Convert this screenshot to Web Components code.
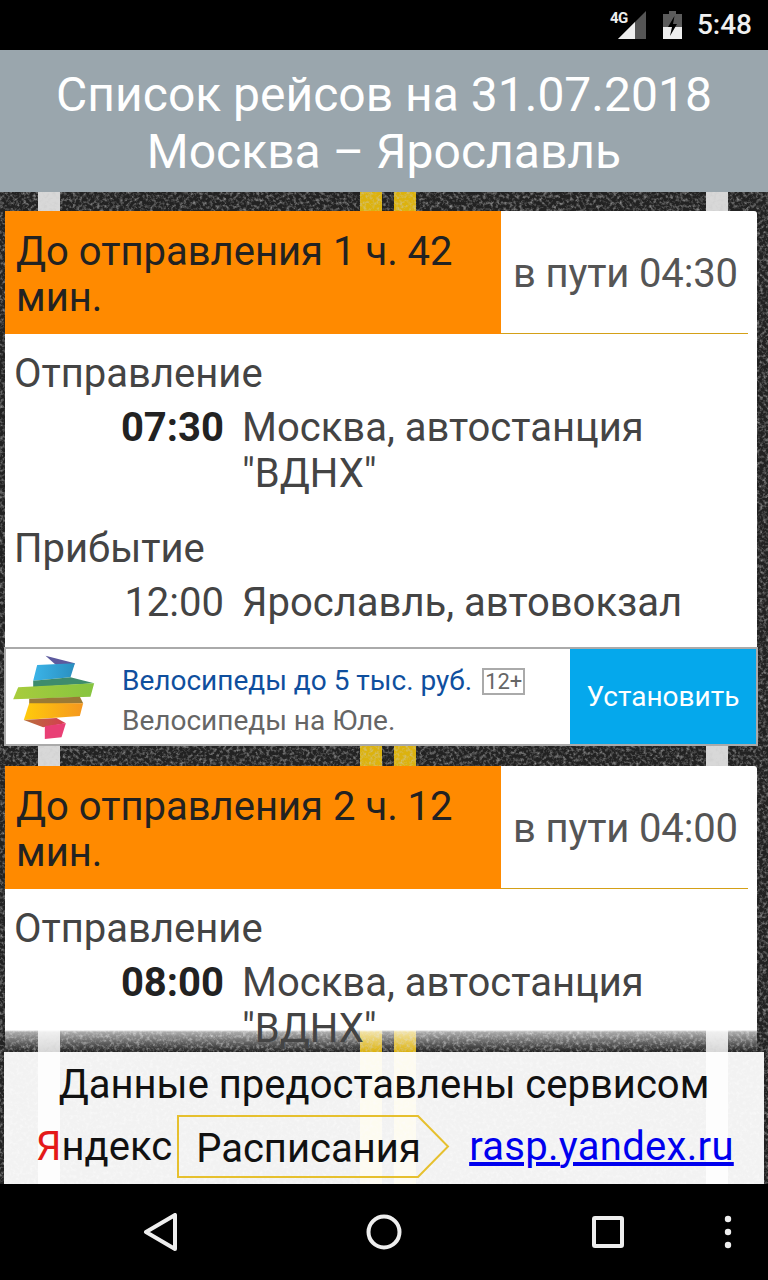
<!DOCTYPE html>
<html lang="ru">
<head>
<meta charset="utf-8">
<title>Список рейсов</title>
<style>
    html, body { margin: 0; padding: 0; background: #000; }
    body { width: 768px; height: 1280px; overflow: hidden; font-family: Roboto, "Liberation Sans", sans-serif; }
    app-shell { width: 768px; height: 1280px; }
</style>
</head>
<body>
<app-shell>
    <status-bar slot="status"></status-bar>
    <title-bar slot="title">
        Список рейсов на 31.07.2018<br>Москва – Ярославль
    </title-bar>
    <trip-card wait="До отправления 1 ч. 42 мин." duration="в пути 04:30"
        dep-time="07:30" dep-place="Москва, автостанция &quot;ВДНХ&quot;"
        arr-time="12:00" arr-place="Ярославль, автовокзал"></trip-card>
    <ad-banner></ad-banner>
    <trip-card class="last" fade wait="До отправления 2 ч. 12 мин." duration="в пути 04:00"
        dep-time="08:00" dep-place="Москва, автостанция &quot;ВДНХ&quot;"></trip-card>
    <source-footer slot="footer"></source-footer>
    <nav-bar slot="nav"></nav-bar>
</app-shell>

<script>
(function() {
    "use strict";

    function define(name, html, init) {
        customElements.define(name, class extends HTMLElement {
            constructor() {
                super();
                this.attachShadow({mode: "open"}).innerHTML = html;
            }
            connectedCallback() {
                if (init) init(this, this.shadowRoot);
            }
        });
    }

    define("app-shell", `
        <style>
            :host { display: flex; flex-direction: column; position: relative; }
            .road { flex: 1; position: relative; overflow: hidden; background: #222; }
            .noise { position: absolute; inset: 0; width: 100%; height: 100%; }
            .line { position: absolute; top: 0; bottom: 0; }
            .white { background: #d8d8d8; width: 22px; }
            .yellow { background: #dcb20e; width: 22px; }
            .list { position: relative; display: flex; flex-direction: column; padding: 19px 11px 0 5px; }
            ::slotted(ad-banner) { margin-bottom: 20px; }
            .over { position: absolute; left: 4px; right: 4px; bottom: 0; }
        </style>
        <slot name="status"></slot>
        <slot name="title"></slot>
        <div class="road">
            <div class="line white" style="left:38px"></div>
            <div class="line yellow" style="left:360px"></div>
            <div class="line yellow" style="left:394px"></div>
            <div class="line white" style="left:706px"></div>
            <svg class="noise" aria-hidden="true">
                <filter id="asphalt" x="0" y="0" width="100%" height="100%">
                    <feTurbulence type="fractalNoise" baseFrequency="0.3" numOctaves="3" seed="7"/>
                    <feColorMatrix type="matrix" values="0 0 0 0 .6  0 0 0 0 .6  0 0 0 0 .6  1.4 0 0 0 -0.62"/>
                </filter>
                <rect width="100%" height="100%" filter="url(#asphalt)"/>
            </svg>
            <div class="list"><slot></slot></div>
            <div class="over"><slot name="footer"></slot></div>
        </div>
        <slot name="nav"></slot>
    `);

    define("status-bar", `
        <style>
            :host { display: flex; height: 50px; background: #000; align-items: center; justify-content: flex-end;
                padding-right: 16px; box-sizing: border-box; color: #f0f0f0; }
            .signal { position: relative; width: 36px; height: 30px; margin: 0 16px 0 0; }
            .signal svg { display: block; }
            .g { position: absolute; left: -1px; top: 0; font: 700 15px/16px Roboto, sans-serif; letter-spacing: -.5px; color: #eee; }
            .battery { display: block; margin-right: 15px; }
            .time { font: 500 28px/50px Roboto, sans-serif; }
        </style>
        <div class="signal">
            <svg width="36" height="30" viewBox="0 0 36 30">
                <polygon points="7,29 35,1 35,29" fill="#555"/>
                <polygon points="7,29 24,12 24,29" fill="#eee"/>
            </svg>
            <span class="g">4G</span>
        </div>
        <svg class="battery" width="19" height="30" viewBox="0 0 19 30">
            <path d="M6 1h7v3h6v13H0V4h6z" fill="#5c5c5c"/>
            <path d="M0 17h19v12H0z" fill="#eee"/>
            <path d="M11.5 6 5 17h4l-2 9 7-12h-4z" fill="#000"/>
        </svg>
        <span class="time">5:48</span>
    `);

    define("title-bar", `
        <style>
            :host { display: block; height: 142px; background: #9aa6ad; color: #fff; text-align: center;
                font-size: 48px; line-height: 57px; padding-top: 16px; box-sizing: border-box; }
        </style>
        <slot></slot>
    `);

    define("trip-card", `
        <style>
            :host { display: flex; flex-direction: column; background: #fff; border-radius: 0 3px 0 0; color: #444;
                font-size: 40px; line-height: 46px; height: 436px; box-sizing: border-box; }
            :host([fade]) { height: 286px; background: linear-gradient(#fff 264px, rgba(255,255,255,.62) 266px, rgba(255,255,255,0) 286px); }
            .head { display: grid; grid-template-columns: 496px 1fr; height: 123px; flex: none; }
            .wait { background: #ff8a00; color: #222; padding: 18px 20px 0 11px; }
            .duration { margin-right: 9px; border-bottom: 1px solid #d4a017; display: flex; align-items: center; padding: 4px 0 0 12px; color: #555; letter-spacing: -.15px; }
            .label { margin: 17px 0 8px 9px; }
            .row { display: grid; grid-template-columns: 219px 1fr; column-gap: 18px; padding-right: 8px; }
            .time { text-align: right; }
            .bold { font-weight: 700; color: #222; }
            .arrive .label { margin-top: 29px; }
            [hidden] { display: none; }
        </style>
        <div class="head">
            <div class="wait"></div>
            <div class="duration"></div>
        </div>
        <div class="depart">
            <div class="label">Отправление</div>
            <div class="row"><span class="time bold" id="dt"></span><span id="dp"></span></div>
        </div>
        <div class="arrive">
            <div class="label">Прибытие</div>
            <div class="row"><span class="time" id="at"></span><span id="ap"></span></div>
        </div>
    `, function(el, root) {
        root.querySelector(".wait").textContent = el.getAttribute("wait");
        root.querySelector(".duration").textContent = el.getAttribute("duration");
        root.querySelector("#dt").textContent = el.getAttribute("dep-time");
        root.querySelector("#dp").textContent = el.getAttribute("dep-place");
        if (el.hasAttribute("arr-time")) {
            root.querySelector("#at").textContent = el.getAttribute("arr-time");
            root.querySelector("#ap").textContent = el.getAttribute("arr-place");
        } else {
            root.querySelector(".arrive").hidden = true;
        }
    });

    define("ad-banner", `
        <style>
            :host { display: flex; height: 99px; box-sizing: border-box; background: #fff; border: 2px solid #aaa;
                margin: 0 0 0 -1px; width: 754px; font-size: 28px; }
            svg { flex: none; margin: 6px 0 0 7px; }
            .text { flex: 1; padding: 12px 0 0 27px; line-height: 40px; }
            .top { display: flex; align-items: center; color: #0f4f9e; }
            .age { margin-left: 10px; width: 43px; height: 27px; box-sizing: border-box; border: 2px solid #aaa;
                font-size: 22px; line-height: 23px; text-align: center; color: #666; }
            .desc { color: #666; }
            .install { flex: none; width: 186px; background: #05a8ec; color: #fff; display: flex; align-items: center;
                justify-content: center; }
        </style>
        <svg width="82" height="84" viewBox="40 45 245 252">
            <defs>
                <linearGradient id="b"><stop offset="0" stop-color="#3bb4e8"/><stop offset="1" stop-color="#2a8fc0"/></linearGradient>
                <linearGradient id="l"><stop offset="0" stop-color="#a8cc3c"/><stop offset="1" stop-color="#86c440"/></linearGradient>
                <linearGradient id="o"><stop offset="0" stop-color="#ffcb0c"/><stop offset="1" stop-color="#f5971e"/></linearGradient>
                <linearGradient id="r"><stop offset="0" stop-color="#b8703c"/><stop offset="1" stop-color="#d63c50"/></linearGradient>
            </defs>
            <polygon points="137,47 225,70 212,100 165,72" fill="#5c5a9e"/>
            <polygon points="112,75 225,70 212,112 100,122" fill="url(#b)"/>
            <polygon points="100,122 212,112 283,130 100,142" fill="#3e8c6c"/>
            <polygon points="55,142 283,130 272,170 40,178" fill="url(#l)"/>
            <polygon points="88,176 240,170 250,190 88,194" fill="#9a7a35"/>
            <polygon points="88,190 250,190 240,228 72,240" fill="url(#o)"/>
            <polygon points="72,240 170,234 198,250 130,262" fill="url(#r)"/>
            <polygon points="135,258 198,250 185,292 135,297" fill="#e93f75"/>
        </svg>
        <div class="text">
            <div class="top">Велосипеды до 5 тыс. руб.<span class="age">12+</span></div>
            <div class="desc">Велосипеды на Юле.</div>
        </div>
        <div class="install">Установить</div>
    `);

    define("source-footer", `
        <style>
            :host { display: block; height: 132px; box-sizing: border-box; background: rgba(255,255,255,.94); color: #111;
                font-size: 40px; line-height: 46px; padding-top: 10px; }
            .lead { text-align: center; }
            .row { display: flex; align-items: center; height: 63px; margin-top: 7px; padding-left: 32px; line-height: 68px; }
            .ya { color: #e41a1a; }
            .arrow { position: relative; width: 273px; height: 63px; margin-left: 5px; padding-left: 19px; box-sizing: border-box; flex: none; }
            .arrow svg { position: absolute; left: 0; top: 0; }
            a { margin-left: 19px; color: #0000ee; letter-spacing: .3px; }
        </style>
        <div class="lead">Данные предоставлены сервисом</div>
        <div class="row">
            <span><span class="ya">Я</span>ндекс</span>
            <div class="arrow">
                <svg width="273" height="63" viewBox="0 0 273 63">
                    <path d="M1 1H241L271 31.5 241 62H1z" fill="none" stroke="#e6c02e" stroke-width="2"/>
                </svg>
                <span>Расписания</span>
            </div>
            <a href="#">rasp.yandex.ru</a>
        </div>
    `);

    define("nav-bar", `
        <style>
            :host { display: flex; height: 96px; background: #000; align-items: center; box-sizing: border-box; padding-left: 143px; }
            svg { display: block; flex: none; fill: none; stroke: #eee; stroke-width: 4; stroke-linejoin: round; }
            .home { margin-left: 189px; }
            .recent { margin-left: 189px; }
            .more { margin-left: 99px; stroke: none; fill: #eee; }
        </style>
        <svg width="34" height="38" viewBox="0 0 34 38"><path d="M32 2v34L3 19z"/></svg>
        <svg class="home" width="36" height="36" viewBox="0 0 36 36"><circle cx="18" cy="18" r="15.5"/></svg>
        <svg class="recent" width="34" height="34" viewBox="0 0 34 34"><rect x="3" y="3" width="28" height="28" rx="1"/></svg>
        <svg class="more" width="8" height="34" viewBox="0 0 8 34"><circle cx="4" cy="4" r="3.2"/><circle cx="4" cy="17" r="3.2"/><circle cx="4" cy="30" r="3.2"/></svg>
    `);
})();
</script>
</body>
</html>
